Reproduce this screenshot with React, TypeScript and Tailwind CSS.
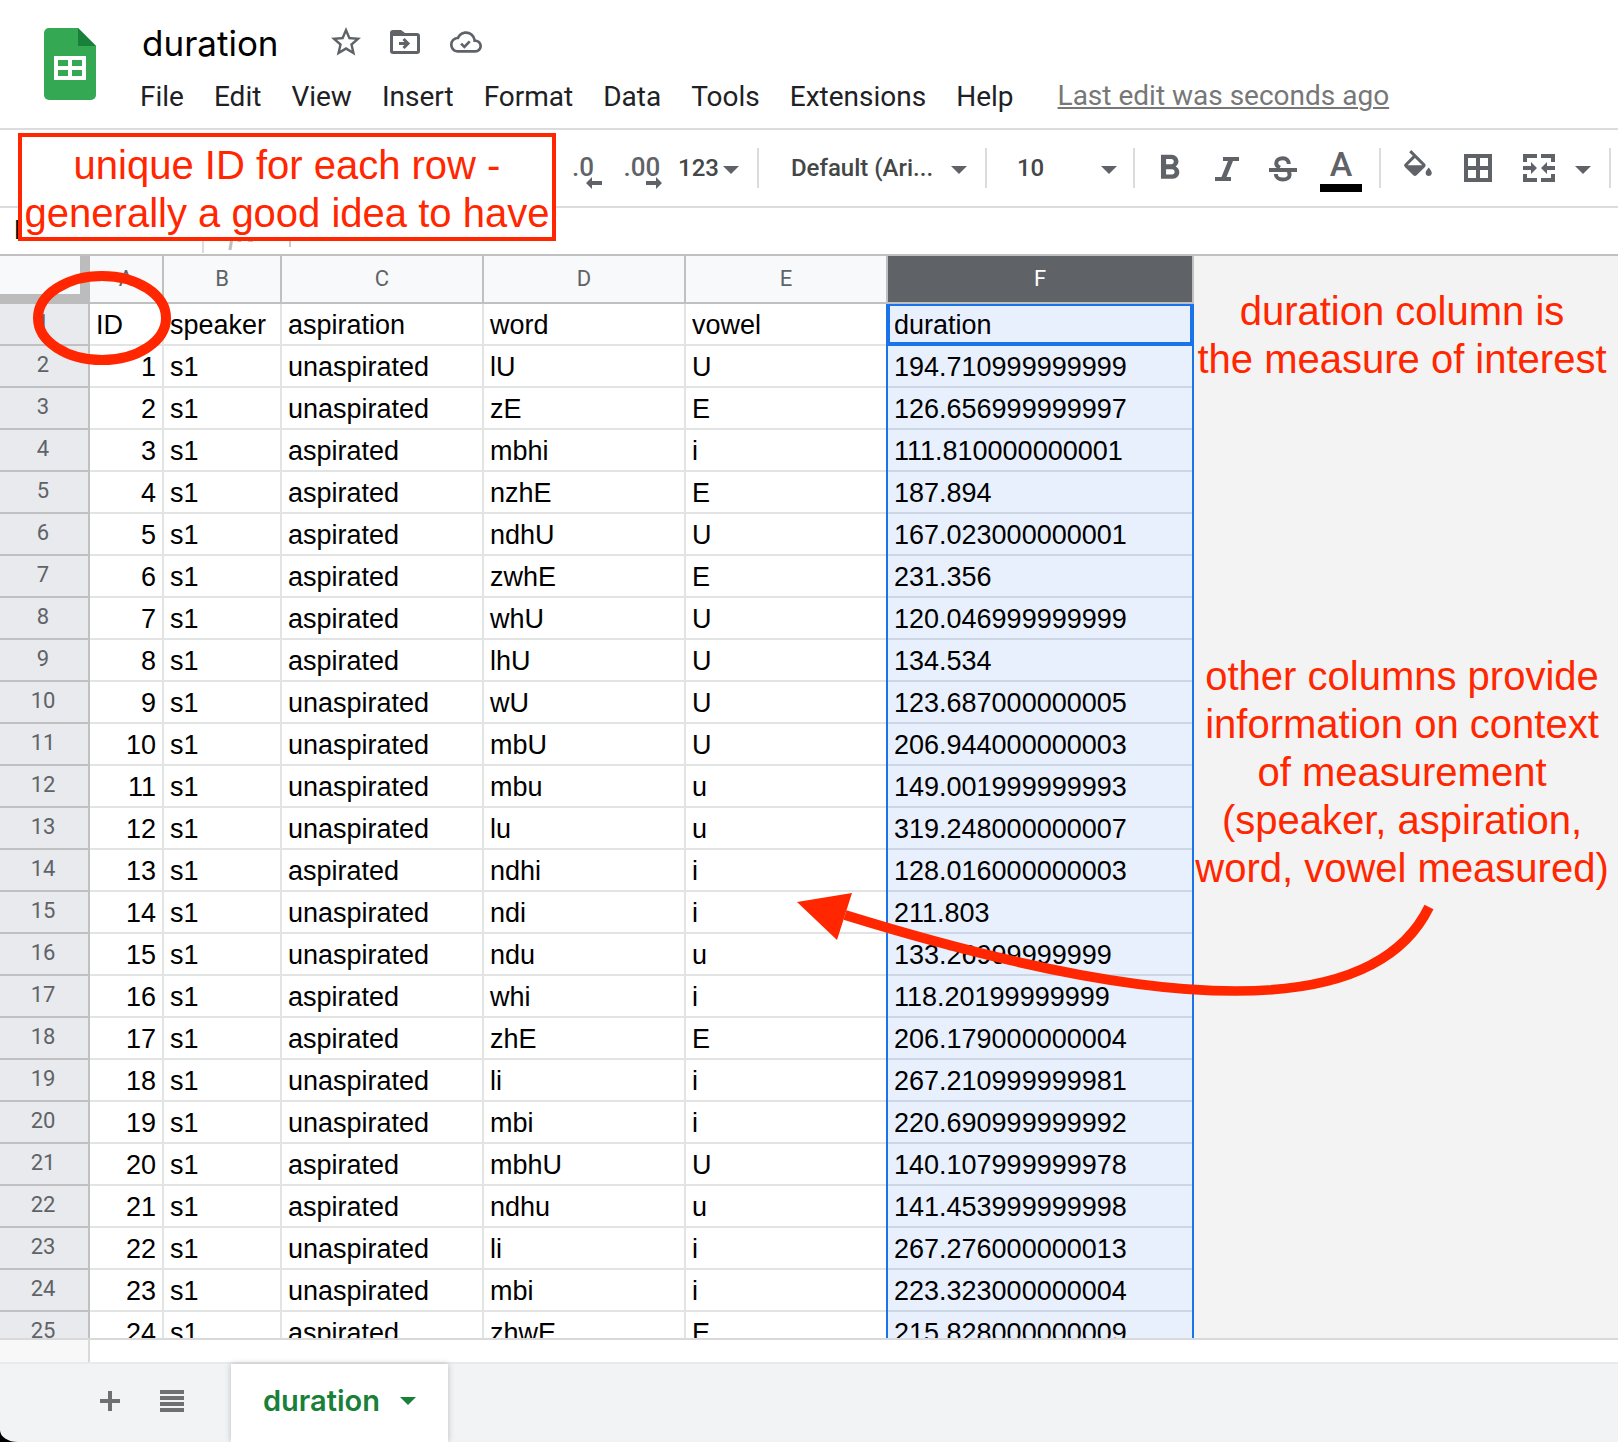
import React from "react";
import { MdStarBorder, MdFormatBold } from "react-icons/md";

const menus = ["File", "Edit", "View", "Insert", "Format", "Data", "Tools", "Extensions", "Help"];

const rows: string[][] = [
  ["1", "s1", "unaspirated", "lU", "U", "194.710999999999"],
  ["2", "s1", "unaspirated", "zE", "E", "126.656999999997"],
  ["3", "s1", "aspirated", "mbhi", "i", "111.810000000001"],
  ["4", "s1", "aspirated", "nzhE", "E", "187.894"],
  ["5", "s1", "aspirated", "ndhU", "U", "167.023000000001"],
  ["6", "s1", "aspirated", "zwhE", "E", "231.356"],
  ["7", "s1", "aspirated", "whU", "U", "120.046999999999"],
  ["8", "s1", "aspirated", "lhU", "U", "134.534"],
  ["9", "s1", "unaspirated", "wU", "U", "123.687000000005"],
  ["10", "s1", "unaspirated", "mbU", "U", "206.944000000003"],
  ["11", "s1", "unaspirated", "mbu", "u", "149.001999999993"],
  ["12", "s1", "unaspirated", "lu", "u", "319.248000000007"],
  ["13", "s1", "aspirated", "ndhi", "i", "128.016000000003"],
  ["14", "s1", "unaspirated", "ndi", "i", "211.803"],
  ["15", "s1", "unaspirated", "ndu", "u", "133.26999999999"],
  ["16", "s1", "aspirated", "whi", "i", "118.20199999999"],
  ["17", "s1", "aspirated", "zhE", "E", "206.179000000004"],
  ["18", "s1", "unaspirated", "li", "i", "267.210999999981"],
  ["19", "s1", "unaspirated", "mbi", "i", "220.690999999992"],
  ["20", "s1", "aspirated", "mbhU", "U", "140.107999999978"],
  ["21", "s1", "aspirated", "ndhu", "u", "141.453999999998"],
  ["22", "s1", "unaspirated", "li", "i", "267.276000000013"],
  ["23", "s1", "unaspirated", "mbi", "i", "223.323000000004"],
  ["24", "s1", "aspirated", "zhwE", "E", "215.828000000009"],
];

function SheetsLogo() {
  return (
    <svg width="52" height="72" viewBox="0 0 52 72" aria-hidden="true">
      <path d="M5 0h29l18 18v49a5 5 0 0 1-5 5H5a5 5 0 0 1-5-5V5a5 5 0 0 1 5-5z" fill="#34a853" />
      <path d="M34 0l18 18H34z" fill="#188038" />
      <path
        d="M10 28h32v24H10zM14 32v6h10v-6zM28 32v6h10v-6zM14 42v6h10v-6zM28 42v6h10v-6z"
        fill="#fff"
        fillRule="evenodd"
      />
    </svg>
  );
}

function MoveIcon() {
  return (
    <svg width="30" height="24" viewBox="0 0 30 24" fill="none" stroke="currentColor" strokeWidth="3" aria-hidden="true">
      <path d="M3 0h8l4 3v3H0V3a3 3 0 0 1 3-3z" fill="currentColor" stroke="none" />
      <rect x="1.5" y="4.5" width="27" height="18" rx="1.5" />
      <path d="M9 13.500h9M13.500 9l4.500 4.500-4.500 4.500" />
    </svg>
  );
}

function CloudIcon() {
  return (
    <svg width="32" height="22" viewBox="0 3.800 24 16.400" aria-hidden="true">
      <path
        d="M19.350 10.040A7.490 7.490 0 0 0 12 4C9.110 4 6.600 5.640 5.350 8.040A5.994 5.994 0 0 0 0 14c0 3.310 2.690 6 6 6h13c2.760 0 5-2.240 5-5 0-2.640-2.050-4.780-4.650-4.960zM19 18H6c-2.210 0-4-1.790-4-4s1.790-4 4-4h.710C7.370 7.690 9.480 6 12 6c3.040 0 5.500 2.460 5.500 5.500v.5H19c1.660 0 3 1.340 3 3s-1.340 3-3 3z"
        fill="currentColor"
      />
      <path d="M8.300 13.200l2.500 2.500 4-4.200" fill="none" stroke="currentColor" strokeWidth="2" />
    </svg>
  );
}

function Caret() {
  return (
    <svg width="16" height="8" viewBox="0 0 16 8" className="pointer-events-none shrink-0" aria-hidden="true">
      <path d="M0 0h16L8 8z" fill="currentColor" />
    </svg>
  );
}

function Divider() {
  return <div className="h-10 w-0.5 shrink-0 bg-[#dadce0]" />;
}

function DecimalArrow({ right = false }: { right?: boolean }) {
  return (
    <svg width="16" height="12" viewBox="0 0 16 12" aria-hidden="true">
      <path d={right ? "M16 6l-6-6v4H0v4h10v4z" : "M0 6l6-6v4h10v4H6v4z"} fill="currentColor" />
    </svg>
  );
}

function ItalicIcon() {
  return (
    <svg width="24" height="24" viewBox="0 0 24 24" aria-hidden="true">
      <path d="M8 0h16v4h-6l-6.500 16H16v4H0v-4h6.500L13 4H8z" fill="currentColor" />
    </svg>
  );
}

function StrikeIcon() {
  return (
    <svg width="28" height="26" viewBox="0 0 28 26" fill="none" stroke="currentColor" strokeWidth="4" aria-hidden="true">
      <path d="M19.800 8C19.800 4.600 17.500 2.300 13.900 2.300C10 2.300 7.200 4.300 7.200 7.200C7.200 9.400 8.600 10.600 11 11.600" />
      <path d="M6.800 18C6.800 21.400 9.800 23.500 13.900 23.500C17.800 23.500 20.600 21.600 20.600 18.700C20.600 17.600 20.300 16.700 19.600 15.500" />
      <path d="M0 14H28" />
    </svg>
  );
}

function FillIcon() {
  return (
    <svg width="28" height="26" viewBox="3 0 18 17" aria-hidden="true">
      <path
        d="M16.560 8.940L7.620 0 6.210 1.410l2.380 2.380-5.150 5.150a1.490 1.490 0 0 0 0 2.120l5.500 5.500c.29.29.68.44 1.060.44s.77-.15 1.060-.44l5.500-5.500c.59-.58.59-1.530 0-2.120zM5.210 10L10 5.210 14.790 10H5.210zM19 11.500s-2 2.170-2 3.500c0 1.100.9 2 2 2s2-.9 2-2c0-1.330-2-3.500-2-3.500z"
        fill="currentColor"
      />
    </svg>
  );
}

function BordersIcon() {
  return (
    <svg width="28" height="28" viewBox="0 0 28 28" fill="none" stroke="currentColor" strokeWidth="4" aria-hidden="true">
      <path d="M2 2h24v24H2zM14 2v24M2 14h24" />
    </svg>
  );
}

function MergeIcon() {
  return (
    <svg width="32" height="28" viewBox="0 0 32 28" fill="currentColor" aria-hidden="true">
      <path d="M0 0h14v4H4v4H0zM18 0h14v8h-4V4H18zM0 20h4v4h10v4H0zM28 20h4v8H18v-4h10z" />
      <path d="M0 12h8V8l6 6-6 6v-4H0zM32 12h-8V8l-6 6 6 6v-4h8z" />
    </svg>
  );
}

const columns = [
  { name: "A", width: "w-[74px]" },
  { name: "B", width: "w-[118px]" },
  { name: "C", width: "w-[202px]" },
  { name: "D", width: "w-[202px]" },
  { name: "E", width: "w-[202px]" },
  { name: "F", width: "w-[306px]" },
];

const cell = "border-b-2 px-1.5 pt-[5px] pb-[3px] leading-8 whitespace-nowrap";
const plain = "border-r-2 border-[#e2e3e3]";
const selected =
  "relative border-r-2 border-[#ccd6e4] bg-[#e8f0fe] before:absolute before:top-0 before:-bottom-0.5 before:-left-0.5 before:w-0.5 before:bg-[#1a73e8] after:absolute after:top-0 after:-right-0.5 after:-bottom-0.5 after:w-0.5 after:bg-[#1a73e8]";
const columnStyle = [`${plain} text-right`, plain, plain, plain, plain, selected];

function RowNumber({ n }: { n: number }) {
  return (
    <th
      scope="row"
      className="border-r-2 border-b-2 border-[#c0c0c0] bg-[#e8eaed] pt-[5px] pr-0.5 pb-[7px] pl-0 text-center align-top font-['Roboto',sans-serif] text-[22px] leading-7 font-normal text-[#5f6368]"
    >
      {n}
    </th>
  );
}

function Grid() {
  return (
    <table className="w-[1194px] shrink-0 table-fixed border-separate border-spacing-0 self-start bg-white text-[27px] text-black">
      <colgroup>
        <col className="w-[90px]" />
        {columns.map((c) => (
          <col key={c.name} className={c.width} />
        ))}
      </colgroup>
      <thead>
        <tr className="h-12">
          <td className="border-r-10 border-b-10 border-[#bcbcbc] bg-[#f8f9fa]" />
          {columns.map((c) => (
            <th
              key={c.name}
              scope="col"
              className={
                c.name === "F"
                  ? "border-r-2 border-b-2 border-[#c0c0c0] bg-[#5f6368] p-0 font-['Roboto',sans-serif] text-[22px] leading-7 font-normal text-white"
                  : "border-r-2 border-b-2 border-[#c0c0c0] bg-[#f8f9fa] p-0 font-['Roboto',sans-serif] text-[22px] leading-7 font-normal text-[#5f6368]"
              }
            >
              {c.name}
            </th>
          ))}
        </tr>
      </thead>
      <tbody>
        <tr>
          <RowNumber n={1} />
          {["ID", "speaker", "aspiration", "word", "vowel"].map((t) => (
            <td key={t} className={`${cell} ${plain}`}>
              {t}
            </td>
          ))}
          <td className={`${cell} ${selected}`}>
            duration
            <span className="absolute top-0 -right-0.5 -bottom-0.5 -left-0.5 border-4 border-t-2 border-[#1a73e8]" />
          </td>
        </tr>
        {rows.map((r, i) => (
          <tr key={r[0]}>
            <RowNumber n={i + 2} />
            {r.map((t, j) => (
              <td key={j} className={`${cell} ${columnStyle[j]}`}>
                {t}
              </td>
            ))}
          </tr>
        ))}
      </tbody>
    </table>
  );
}

function Toolbar() {
  return (
    <div
      role="toolbar"
      className="flex h-[78px] shrink-0 items-center border-b-2 border-[#dadce0] pl-[568px] font-['Roboto',sans-serif] text-2xl font-medium text-[#5f6368]"
    >
      <button className="flex w-[34px] flex-col pt-2.5" aria-label="Decrease decimal places">
        <span className="-ml-1 text-[26px] leading-5">.0</span>
        <span className="self-end">
          <DecimalArrow />
        </span>
      </button>
      <button className="ml-6 flex w-9 flex-col pt-2.5" aria-label="Increase decimal places">
        <span className="-ml-1 text-[26px] leading-5">.00</span>
        <span className="self-end">
          <DecimalArrow right />
        </span>
      </button>
      <button className="mr-[18px] ml-4 flex items-center gap-1 text-[#444746]">
        123
        <span className="pt-1 text-[#5f6368]">
          <Caret />
        </span>
      </button>
      <Divider />
      <label className="relative ml-8 flex w-[176px] items-center">
        <select aria-label="Font" className="w-full appearance-none bg-transparent text-[#444746]">
          <option>Default (Ari...</option>
        </select>
        <span className="absolute right-0 pt-1">
          <Caret />
        </span>
      </label>
      <span className="w-[18px]" />
      <Divider />
      <label className="relative ml-[30px] flex w-[100px] items-center">
        <select aria-label="Font size" className="w-full appearance-none bg-transparent text-[#444746]">
          <option>10</option>
        </select>
        <span className="absolute right-0 pt-1">
          <Caret />
        </span>
      </label>
      <span className="w-4" />
      <Divider />
      <button className="ml-[14px]" aria-label="Bold">
        <MdFormatBold size={41} />
      </button>
      <button className="ml-[25px] pt-0.5" aria-label="Italic">
        <ItalicIcon />
      </button>
      <button className="ml-[30px] pt-0.5" aria-label="Strikethrough">
        <StrikeIcon />
      </button>
      <button className="ml-[23px] flex w-[42px] flex-col items-center pt-1" aria-label="Text color">
        <span className="pb-1 text-[34px] leading-8">A</span>
        <span className="h-2 w-full bg-black" />
      </button>
      <span className="w-[17px]" />
      <Divider />
      <button className="ml-[23px] pb-2.5" aria-label="Fill color">
        <FillIcon />
      </button>
      <button className="ml-8" aria-label="Borders">
        <BordersIcon />
      </button>
      <button className="ml-[31px]" aria-label="Merge cells">
        <MergeIcon />
      </button>
      <button className="mr-[18px] ml-5 pt-1" aria-label="Merge options">
        <Caret />
      </button>
      <Divider />
    </div>
  );
}

export default function App() {
  return (
    <div className="relative flex h-screen flex-col overflow-hidden bg-black font-['Liberation_Sans',Arial,sans-serif]">
      <header className="flex shrink-0 items-start border-b-2 border-[#dadce0] bg-white pt-5 pb-[7px] pl-11">
        <div className="pt-2">
          <SheetsLogo />
        </div>
        <div className="ml-11">
          <div className="flex h-12 items-center text-[#5f6368]">
            <h1 className="w-[188px] pb-0.5 pl-0.5 font-['Inter',sans-serif] text-[35px] leading-10 text-black">duration</h1>
            <button aria-label="Star" className="mb-1">
              <MdStarBorder size={36} />
            </button>
            <button aria-label="Move" className="mb-1 ml-[26px]">
              <MoveIcon />
            </button>
            <button aria-label="Document status" className="mb-1 ml-[30px]">
              <CloudIcon />
            </button>
          </div>
          <nav className="mt-[5px] flex h-12 items-center gap-[30px] font-['Roboto',sans-serif] text-[28px] leading-9 text-[#202124]">
            {menus.map((m) => (
              <button key={m}>{m}</button>
            ))}
            <a href="#history" className="ml-[14px] pb-0.5 text-[#777777] underline decoration-2 underline-offset-2">
              Last edit was seconds ago
            </a>
          </nav>
        </div>
      </header>
      <div className="bg-white">
        <Toolbar />
      </div>
      <div className="flex h-12 shrink-0 items-start border-b-2 border-[#c0c0c0] bg-white">
        <input
          aria-label="Name box"
          defaultValue="F1"
          className="h-11 w-[202px] pl-3.5 font-['Roboto',sans-serif] text-[26px] text-black outline-none"
        />
        <div className="h-[45px] w-0.5 bg-[#dadce0]" />
        <span className="w-[85px] pt-1 pl-6 font-['Liberation_Serif',serif] text-[36px] leading-9 text-[#bdbdbd] italic">fx</span>
        <div className="h-[39px] w-0.5 bg-[#cccccc]" />
        <input aria-label="Formula" className="h-11 flex-1 outline-none" />
      </div>

      <main className="relative flex min-h-0 flex-1 overflow-hidden bg-[#f3f3f3]">
        <Grid />
        <aside className="flex-1 pt-[31px] pr-2 text-center text-[40px] leading-[48px] whitespace-nowrap text-[#ff2600]">
          <p>
            duration column is
            <br />
            the measure of interest
          </p>
          <p className="mt-[269px]">
            other columns provide
            <br />
            information on context
            <br />
            of measurement
            <br />
            (speaker, aspiration,
            <br />
            word, vowel measured)
          </p>
        </aside>
        <svg className="pointer-events-none absolute inset-0 h-full w-full" fill="none" stroke="#ff2600" strokeWidth="10" aria-hidden="true">
          <ellipse cx="102" cy="62" rx="64" ry="42" />
          <path d="M1429 651Q1349 815 845 659" />
          <path d="M797 646L852 637L837 684z" fill="#ff2600" stroke="none" />
        </svg>
      </main>

      <div className="flex h-6 shrink-0 border-t-2 border-[#d9d9d9] bg-white">
        <div className="w-[90px] border-r-2 border-[#d9d9d9] bg-[#f8f8f8]" />
      </div>
      <footer className="flex h-20 shrink-0 items-stretch rounded-bl-[18px_12px] border-t-2 border-[#e8eaed] bg-[#f1f3f4] pl-[100px] text-[#707070]">
        <button aria-label="Add sheet" className="pb-1">
          <svg width="20" height="20" viewBox="0 0 20 20" aria-hidden="true">
            <path d="M8 0h4v8h8v4h-8v8H8v-8H0V8h8z" fill="currentColor" />
          </svg>
        </button>
        <button aria-label="All sheets" className="ml-10 pb-1">
          <svg width="24" height="22" viewBox="0 0 24 22" aria-hidden="true">
            <path d="M0 0h24v4H0zM0 6h24v4H0zM0 12h24v4H0zM0 18h24v4H0z" fill="currentColor" />
          </svg>
        </button>
        <button className="ml-[47px] flex items-center gap-5 bg-white px-8 pb-1 font-['Inter',sans-serif] text-[29px] font-semibold text-[#188038] shadow-[0_0_6px_rgba(60,64,67,0.3)]">
          duration
          <Caret />
        </button>
      </footer>

      <div className="absolute top-[133px] left-[18px] w-[538px] border-4 border-[#ff2600] bg-white pt-1 text-center text-[40px] leading-[48px] whitespace-nowrap text-[#ff2600]">
        unique ID for each row -
        <br />
        generally a good idea to have
      </div>
    </div>
  );
}
